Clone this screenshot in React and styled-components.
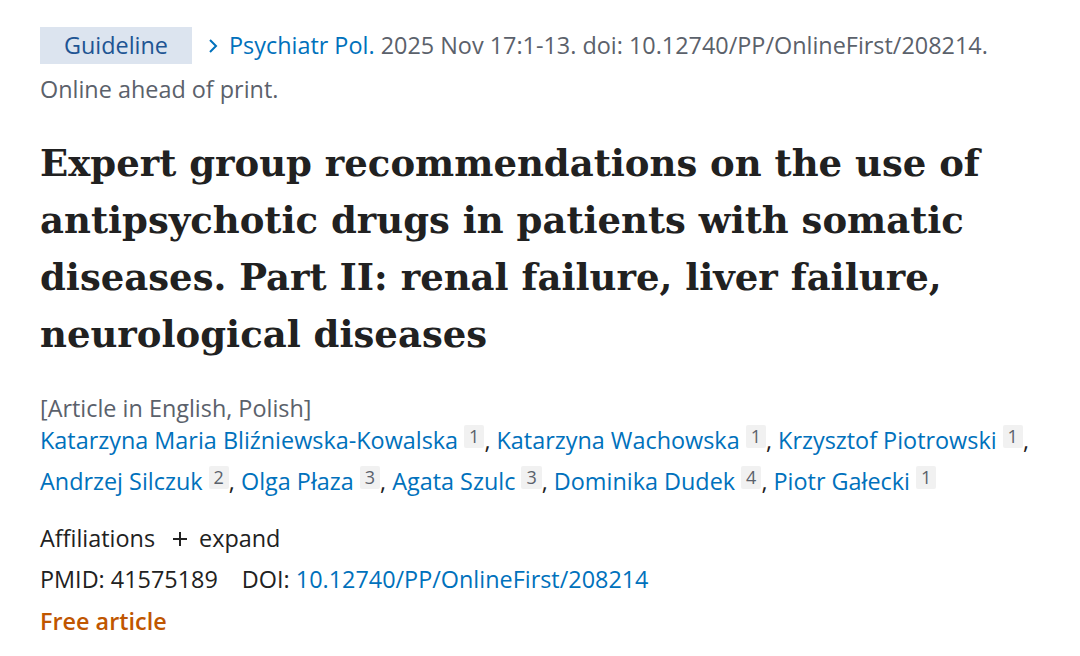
import React from 'react';
import styled, { createGlobalStyle } from 'styled-components';

const Global = createGlobalStyle`
  body {
    margin: 0;
    background: #fff;
    font-family: "Open Sans", "Noto Sans", sans-serif;
  }
`;

const Page = styled.div`
  padding: 23px 40px 0 40px;
  width: 1080px;
  box-sizing: border-box;
`;

const Citation = styled.div`
  font-size: 23.4px;
  line-height: 44px;
  color: #5b616b;
  white-space: nowrap;
`;

const Badge = styled.span`
  display: inline-block;
  background: #dce4ef;
  color: #205493;
  padding: 0 24px;
  line-height: 37px;
  margin-right: 14px;
`;

const Chevron = styled.svg`
  width: 14px;
  height: 16px;
  margin-right: 9px;
  vertical-align: 0px;
`;

const Link = styled.a`
  color: #0071bc;
  text-decoration: none;
`;

const Title = styled.h1`
  font-family: "DejaVu Serif", serif;
  font-weight: 700;
  font-size: 37px;
  line-height: 57px;
  color: #212121;
  margin: 24px 0 25px;
`;

const Line = styled.div`
  font-size: 23.4px;
  line-height: 41px;
  color: ${p => p.$muted ? '#5b616b' : '#212121'};
  display: flex;
  align-items: center;
`;

const Authors = styled.div`
  font-size: 23.4px;
  line-height: 41px;
  color: #212121;
  margin: -9px 0 16px;
`;

const Sup = styled.span`
  display: inline-block;
  background: #f1f1f1;
  color: #5b616b;
  font-size: 18px;
  line-height: 23px;
  padding: 0 5px;
  margin-left: 6px;
  vertical-align: 6px;
  border-radius: 2px;
`;

const Plus = styled.svg`
  width: 16px;
  height: 16px;
  margin: 0 11px 0 17px;
`;

const Free = styled.div`
  font-size: 23.4px;
  font-weight: 600;
  color: #c05600;
  line-height: 42px;
`;

const authors = [
  ['Katarzyna Maria Bliźniewska-Kowalska', 1],
  ['Katarzyna Wachowska', 1],
  ['Krzysztof Piotrowski', 1],
  ['Andrzej Silczuk', 2],
  ['Olga Płaza', 3],
  ['Agata Szulc', 3],
  ['Dominika Dudek', 4],
  ['Piotr Gałecki', 1],
];

export default function App() {
  return (
    <Page>
      <Global />
      <Citation>
        <Badge>Guideline</Badge>
        <Chevron viewBox="0 0 14 16">
          <path d="M4 2 L10 8 L4 14" fill="none" stroke="#0071bc" strokeWidth="2" />
        </Chevron>
        <Link href="#">Psychiatr Pol.</Link> 2025 Nov 17:1-13. doi: 10.12740/PP/OnlineFirst/208214.
      </Citation>
      <Citation>Online ahead of print.</Citation>
      <Title>
        Expert group recommendations on the use of antipsychotic drugs in patients with somatic
        diseases. Part II: renal failure, liver failure, neurological diseases
      </Title>
      <Line $muted>[Article in English, Polish]</Line>
      <Authors>
        {authors.map(([name, n], i) => (
          <React.Fragment key={name}>
            <Link href="#">{name}</Link>
            <Sup>{n}</Sup>
            {i < authors.length - 1 ? ', ' : ''}
          </React.Fragment>
        ))}
      </Authors>
      <Line>
        Affiliations
        <Plus viewBox="0 0 16 16">
          <path d="M8 1 V15 M1 8 H15" stroke="#212121" strokeWidth="2" />
        </Plus>
        expand
      </Line>
      <Line>
        PMID: 41575189<span style={{ width: 24 }} />DOI:&nbsp;<Link href="#">10.12740/PP/OnlineFirst/208214</Link>
      </Line>
      <Free>Free article</Free>
    </Page>
  );
}
